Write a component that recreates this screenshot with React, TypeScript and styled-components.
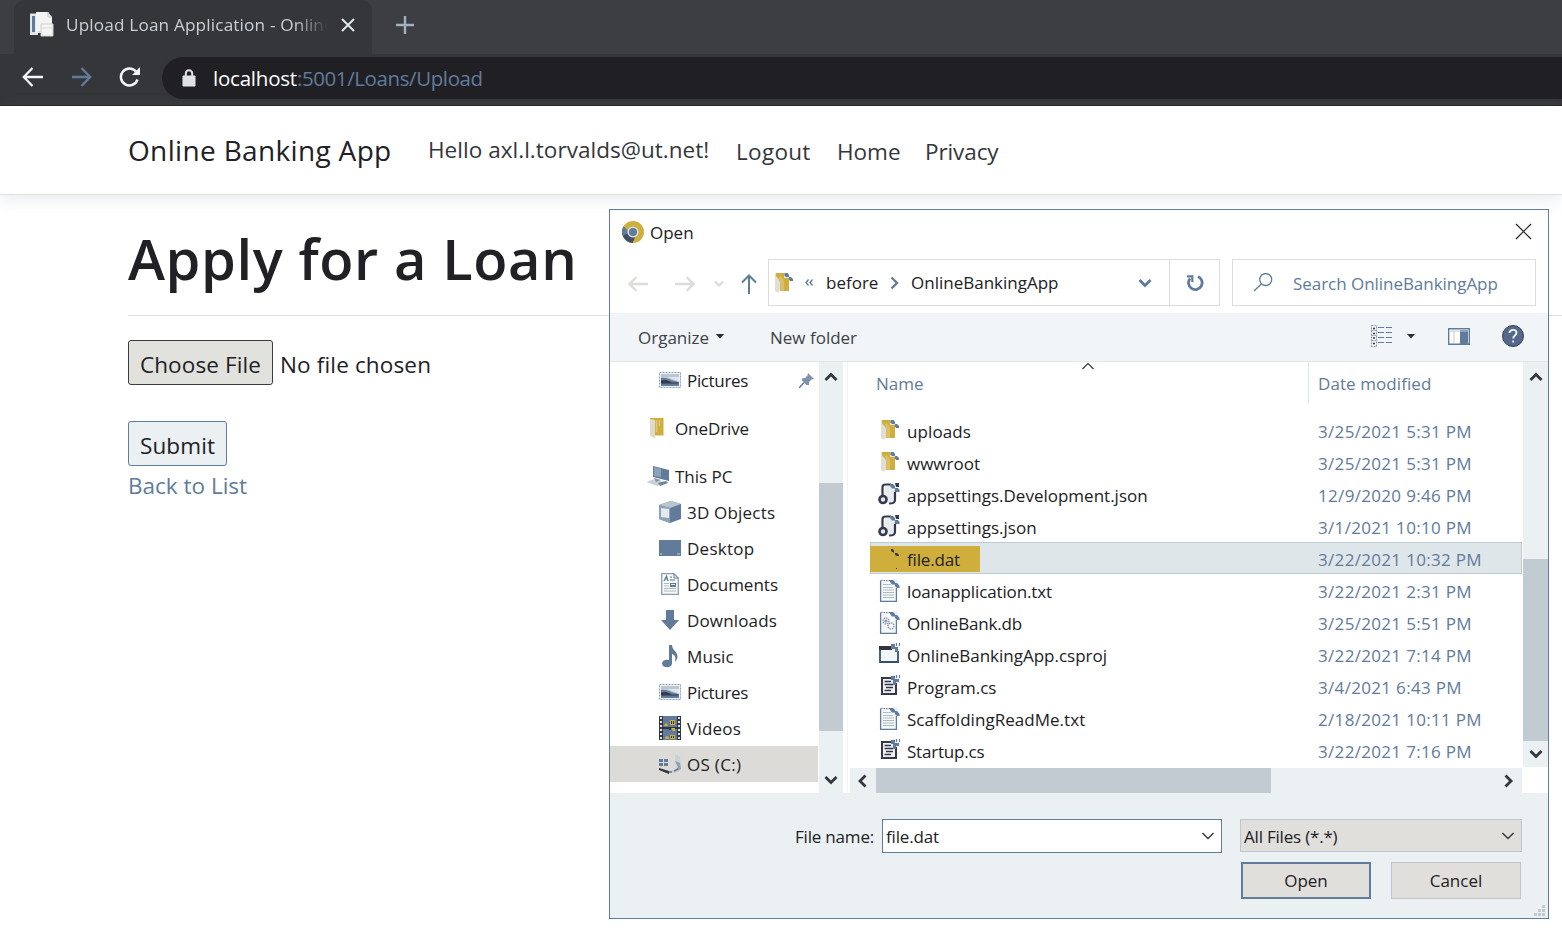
import React from "react";
import styled, { createGlobalStyle } from "styled-components";

const BLUE = "#617b9b";
const YELLOW = "#cfae3c";
const INK = "#212125";
const PALE = "#ebf0f3";
const THUMB = "#c1cbd1";

const Global = createGlobalStyle`
  html, body { margin: 0; padding: 0; background: #fff; overflow: hidden; }
  *, *::before, *::after { box-sizing: border-box; }
  body { font-family: "Open Sans", "Noto Sans", sans-serif; color: ${INK}; }
  svg { display: block; flex: none; }
  button { font: inherit; color: inherit; padding: 0; margin: 0; letter-spacing: inherit; }
`;

const Page = styled.div`
  position: relative;
  width: 1562px;
  height: 930px;
  overflow: hidden;
  background: #fff;
`;

/* Browser chrome */
const Browser = styled.header`
  height: 106px;
  background: #35363a;
  border-bottom: 1px solid #232227;
`;
const TabStrip = styled.div`
  display: flex;
  height: 54px;
  padding-left: 14px;
  background: #3d3e42;
`;
const Tab = styled.div`
  display: flex;
  align-items: center;
  width: 358px;
  padding: 0 14px 4px 15px;
  background: #35363a;
  border-radius: 11px 11px 0 0;
`;
const TabTitle = styled.span`
  width: 262px;
  margin: 0 13px 0 11px;
  white-space: nowrap;
  font-size: 17.2px;
  line-height: 28px;
  letter-spacing: 0.15px;
  color: #c9d0d4;
  mask-image: linear-gradient(to right, #000 228px, transparent 262px);
`;
const NewTab = styled.div`
  display: flex;
  align-items: center;
  padding: 0 0 4px 24px;
`;
const AddressRow = styled.div`
  display: flex;
  align-items: center;
  height: 51px;
  padding: 0 0 4px 22px;
`;
const NavGlyph = styled.div<{ $w: number }>`
  width: ${(p) => p.$w}px;
  padding-bottom: 2px;
`;
const UrlPill = styled.div`
  display: flex;
  align-items: center;
  flex: 1;
  height: 42px;
  padding-left: 20px;
  border-radius: 21px 0 0 21px;
  background: #202024;
`;
const Url = styled.span`
  margin-left: 17px;
  font-size: 20.5px;
  line-height: 40px;
  letter-spacing: -0.4px;
  color: ${BLUE};
  white-space: nowrap;
`;
const Host = styled.span`
  letter-spacing: -0.22px;
  color: #fff;
`;

/* Site */
const SiteNav = styled.nav`
  display: flex;
  align-items: center;
  height: 89px;
  padding-left: 128px;
  background: #fff;
  border-bottom: 1px solid #dfe0de;
  box-shadow: 0 4px 16px rgba(120, 150, 170, 0.18);
  white-space: nowrap;
`;
const Brand = styled.a`
  width: 300px;
  font-size: 28px;
  line-height: 40px;
  letter-spacing: 0.34px;
`;
const NavItem = styled.a<{ $w: number; $drop: number; $track?: number }>`
  width: ${(p) => p.$w}px;
  padding-top: ${(p) => p.$drop}px;
  font-size: 22.5px;
  line-height: 36px;
  letter-spacing: ${(p) => p.$track ?? 0}px;
  color: #34363b;
`;
const Main = styled.main`
  padding: 23px 0 0 128px;
  font-size: 22.5px;
`;
const Heading = styled.h1`
  margin: 0;
  height: 97px;
  font-size: 56px;
  line-height: 80px;
  font-weight: 600;
  letter-spacing: 0.6px;
`;
const Rule = styled.hr`
  margin: 0 0 24px;
  border: 0;
  border-top: 1px solid #dfe0de;
`;
const FileField = styled.div`
  display: flex;
  align-items: center;
  gap: 7px;
  height: 45px;
  margin-bottom: 36px;
`;
const FileStatus = styled.span`
  padding-top: 4px;
  letter-spacing: 0.15px;
`;
const PageButton = styled.button<{ $w: number; $strong?: boolean }>`
  display: block;
  width: ${(p) => p.$w}px;
  height: 45px;
  border: 1px solid ${(p) => (p.$strong ? "#3b3c42" : BLUE)};
  border-radius: 3px;
  background: ${(p) => (p.$strong ? "#e1e1de" : PALE)};
  line-height: 43px;
  padding-top: 2px;
  letter-spacing: 0.12px;
  white-space: nowrap;
`;
const BackLink = styled.a`
  display: block;
  line-height: 40px;
  color: ${BLUE};
`;

/* Dialog */
const Dialog = styled.section`
  position: absolute;
  left: 609px;
  top: 209px;
  width: 940px;
  height: 710px;
  display: flex;
  flex-direction: column;
  border: 1px solid ${BLUE};
  background: #fff;
  font-size: 17px;
  line-height: 24px;
  white-space: nowrap;
`;
const TitleBar = styled.div`
  display: flex;
  align-items: center;
  height: 49px;
  padding: 0 16px 6px 12px;
`;
const Title = styled.span`
  flex: 1;
  margin: 2px 0 0 6px;
`;
const LocationRow = styled.div`
  display: flex;
  height: 54px;
  padding-left: 18px;
`;
const Arrows = styled.div`
  display: flex;
  align-items: center;
  width: 140px;
  height: 49px;
`;
const Spacer = styled.div<{ $w?: number }>`
  ${(p) => (p.$w ? `width: ${p.$w}px;` : "flex: 1;")}
`;
const Boxed = styled.div<{ $w: number; $left?: number; $pad: number }>`
  display: flex;
  align-items: center;
  width: ${(p) => p.$w}px;
  height: 47px;
  margin-left: ${(p) => p.$left ?? 0}px;
  padding-left: ${(p) => p.$pad}px;
  border: 1px solid #dcdcd9;
`;
const RefreshCell = styled.div`
  display: flex;
  align-items: center;
  justify-content: center;
  width: 50px;
  height: 45px;
  margin-left: 15px;
  border-left: 1px solid #dcdcd9;
`;
const Crumb = styled.span<{ $w: number; $drop?: number }>`
  width: ${(p) => p.$w}px;
  padding-top: ${(p) => p.$drop ?? 0}px;
`;
const SearchText = styled.span`
  margin-left: 20px;
  padding-top: 2px;
  letter-spacing: -0.04px;
  color: ${BLUE};
`;
const Toolbar = styled.div`
  display: flex;
  align-items: center;
  height: 49px;
  padding: 0 24px 2px 28px;
  background: #f1f5f7;
  border-bottom: 1px solid #e1e6e8;
  color: #3d4148;
`;
const Body = styled.div`
  display: flex;
  height: 431px;
`;
const Tree = styled.div`
  width: 209px;
`;
const TreeRow = styled.div<{ $root?: boolean; $gap?: boolean; $on?: boolean }>`
  display: flex;
  align-items: center;
  width: 208px;
  height: 36px;
  margin-bottom: ${(p) => (p.$gap ? 12 : 0)}px;
  padding-left: ${(p) => (p.$root ? 36 : 49)}px;
  background: ${(p) => (p.$on ? "#dcdbd7" : "transparent")};
`;
const TreeIcon = styled.span<{ $root?: boolean }>`
  display: flex;
  width: ${(p) => (p.$root ? 29 : 28)}px;
  padding-left: ${(p) => (p.$root ? 1 : 0)}px;
`;
const TreeLabel = styled.span<{ $track?: number }>`
  flex: 1;
  padding-top: 2px;
  letter-spacing: ${(p) => p.$track ?? 0}px;
`;
const PinSlot = styled.span`
  margin-right: 4px;
`;
const VScroll = styled.div<{ $w: number }>`
  display: flex;
  flex-direction: column;
  width: ${(p) => p.$w}px;
  background: ${PALE};
`;
const VPart = styled.div<{ $h: number; $thumb?: boolean; $pad?: number }>`
  display: flex;
  justify-content: center;
  height: ${(p) => p.$h}px;
  padding-top: ${(p) => p.$pad ?? 0}px;
  background: ${(p) => (p.$thumb ? THUMB : "transparent")};
`;
const Files = styled.div`
  width: 675px;
  margin: 0 1px 0 4px;
  padding-left: 2px;
  border-left: 1px solid #f1f5f7;
`;
const Columns = styled.div`
  display: flex;
  height: 52px;
  padding-left: 26px;
  color: ${BLUE};
`;
const NameColumn = styled.div`
  display: flex;
  width: 432px;
  padding-top: 10px;
`;
const SortMark = styled.span`
  margin: -13px 0 0 157px;
`;
const DateColumn = styled.div`
  height: 41px;
  padding: 10px 0 0 9px;
  border-left: 1px solid #dfe4e6;
  letter-spacing: 0.08px;
`;
const FileRow = styled.div<{ $on?: boolean }>`
  display: flex;
  align-items: center;
  height: 32px;
  margin-left: 20px;
  padding-left: 8px;
  background: ${(p) => (p.$on ? "#dfe6ea" : "transparent")};
  box-shadow: ${(p) => (p.$on ? "inset 0 0 0 1px #bccad2" : "none")};
`;
const FileIcon = styled.span`
  width: 24px;
`;
const FileName = styled.span<{ $track?: number }>`
  width: 411px;
  margin-left: 5px;
  padding-top: 3px;
  letter-spacing: ${(p) => p.$track ?? 0}px;
`;
const Marker = styled.span`
  display: flex;
  align-items: center;
  width: 110px;
  height: 26px;
  margin: 2px 338px 0 -8px;
  padding-left: 8px;
  background: ${YELLOW};
`;
const MarkerText = styled.span`
  margin-left: 5px;
  padding-top: 1px;
  letter-spacing: -0.15px;
`;
const FileDate = styled.span`
  padding-top: 3px;
  letter-spacing: 0.32px;
  color: ${BLUE};
`;
const HScroll = styled.div`
  display: flex;
  align-items: center;
  height: 25px;
  margin-top: 2px;
  padding-right: 7px;
  background: ${PALE};
`;
const HThumb = styled.div`
  width: 395px;
  height: 25px;
  background: ${THUMB};
`;
const HArrow = styled.div`
  display: flex;
  justify-content: center;
  width: 26px;
`;
const Footer = styled.footer`
  flex: 1;
  position: relative;
  padding: 26px 26px 0 0;
  background: ${PALE};
`;
const FooterRow = styled.div<{ $top?: number }>`
  display: flex;
  justify-content: flex-end;
  margin-top: ${(p) => p.$top ?? 0}px;
  padding-right: ${(p) => (p.$top ? 1 : 0)}px;
`;
const FieldLabel = styled.span`
  height: 34px;
  margin-right: 8px;
  line-height: 35px;
  letter-spacing: -0.2px;
`;
const Combo = styled.div<{ $w: number; $grey?: boolean }>`
  display: flex;
  align-items: center;
  justify-content: space-between;
  width: ${(p) => p.$w}px;
  height: ${(p) => (p.$grey ? 33 : 34)}px;
  margin-left: ${(p) => (p.$grey ? 18 : 0)}px;
  padding: 0 6px 0 3px;
  border: 1px solid ${(p) => (p.$grey ? "#bdc7cd" : BLUE)};
  background: ${(p) => (p.$grey ? "#e0dfdb" : "#fff")};
`;
const ComboText = styled.span<{ $track: number }>`
  padding-top: 2px;
  letter-spacing: ${(p) => p.$track}px;
`;
const DialogButton = styled.button<{ $main?: boolean }>`
  width: 130px;
  height: 37px;
  margin-left: 20px;
  border: ${(p) => (p.$main ? `2px solid ${BLUE}` : "1px solid #bdc7cd")};
  background: #e0dfdb;
  padding-top: 1px;
`;
const Grip = styled.span`
  position: absolute;
  right: 2px;
  bottom: 1px;
`;

type StrokeProps = { w: number; h: number; d: string; c: string; s?: number };
const Stroke = ({ w, h, d, c, s = 2 }: StrokeProps) => (
  <svg width={w} height={h} viewBox={`0 0 ${w} ${h}`} fill="none" stroke={c} strokeWidth={s}>
    <path d={d} />
  </svg>
);

const Chevron = ({ dir, c = "#34363f", s = 2.8 }: { dir: "up" | "down" | "left" | "right"; c?: string; s?: number }) => {
  const d = {
    up: "M1.500 10L7 4.500L12.500 10",
    down: "M1.500 4L7 9.500L12.500 4",
    left: "M9.500 1.500L4 7L9.500 12.500",
    right: "M4.500 1.500L10 7L4.500 12.500",
  }[dir];
  return <Stroke w={14} h={14} d={d} c={c} s={s} />;
};

const Caret = () => (
  <svg width="8" height="5" viewBox="0 0 8 5"><path d="M0 0H8L4 4.5Z" fill="#2b2c31" /></svg>
);

const PageIcon = () => (
  <svg width="26" height="26" viewBox="0 0 26 26">
    <path d="M1 1.500H9V23H1Z" fill="#dfe6ea" />
    <path d="M3 4H6V20H3Z" fill={BLUE} />
    <path d="M7 0H19L23 5V21H7Z" fill="#f4f4f2" />
    <path d="M19 0V5H23" fill="none" stroke="#b9c4ca" />
    <path d="M12 12H24V24H12Z" fill="#f5f5f3" stroke="#cfcfc9" />
    <path d="M13 16H23M9 20H12" stroke="#d9d9d4" />
  </svg>
);

const ChromeLogo = () => (
  <svg width="22" height="22" viewBox="0 0 22 22">
    <circle cx="11" cy="11" r="11" fill={YELLOW} />
    <path d="M1.600 5.500A11 11 0 0 0 10.500 22L14 14L7 13Z" fill="#3f4e66" />
    <path d="M1.600 5.500A11 11 0 0 0 1 15L7.500 11Z" fill={BLUE} />
    <circle cx="11" cy="11" r="5.600" fill="#d5dce0" />
    <circle cx="11" cy="11" r="4" fill={BLUE} />
  </svg>
);

const Folder = () => (
  <svg width="22" height="24" viewBox="0 0 22 24">
    <path d="M3 2H15V20H7L6 22L3 20Z" fill="#e2dfd2" />
    <path d="M4 2H14V6H17V20H8V10L4 5Z" fill={YELLOW} />
    <path d="M7 6L9 5L12 10V20H8V12Z" fill="#d8c06a" />
    <path d="M12 2H15V5H17V7H12Z" fill="#dde3e6" />
    <path d="M12.500 2H15.500L17 4V6H14L12.500 4.500Z" fill={BLUE} />
    <path d="M17 6H19L21 8V10H18L17 8.500Z" fill={BLUE} />
  </svg>
);

const DriveFolder = () => (
  <svg width="22" height="22" viewBox="0 0 22 22">
    <path d="M3 1H16.500V18.500H8V21L3 18.500Z" fill={YELLOW} />
    <path d="M3 2L8 3V21L3 18.500Z" fill="#dedbce" />
    <path d="M9.500 3V15M12.500 3V9" stroke="#ddc980" strokeWidth="1.500" />
  </svg>
);

const Picture = () => (
  <svg width="22" height="16" viewBox="0 0 22 16">
    <path d="M.5 .5H21.500V15.500H.5Z" fill="#eef2f4" stroke="#8ba0b4" strokeDasharray="2 1" />
    <path d="M2 2H20V14H2Z" fill="#bac7cf" />
    <path d="M2 6C8 5 12 9 20 10V14H2Z" fill={BLUE} />
    <path d="M2 8.500L7 8L13 10.500L19 10.500V11.500H2Z" fill="#34384a" />
    <path d="M8 5L20 5V9.500Z" fill="#e2e8eb" />
  </svg>
);

const Computer = () => (
  <svg width="24" height="22" viewBox="2 0 24 22">
    <path d="M8 1L24 5V16L8 12Z" fill={BLUE} />
    <path d="M9 2L16 4V12L9 11Z" fill="#8da2b8" />
    <path d="M1 17L9 14L20 17L12 21Z" fill="#c7d0d6" />
    <path d="M9 13L16 15L11 17Z" fill="#8496aa" />
    <path d="M13 18L21 16L23 18L15 21Z" fill="#6d849f" />
  </svg>
);

const Cube = () => (
  <svg width="22" height="24" viewBox="0 0 22 24">
    <path d="M0 5L12 1L22 4V19L11 23L0 19Z" fill={BLUE} />
    <path d="M0 5L12 1L22 4L11 8Z" fill="#b9c6ce" />
    <path d="M0 5L11 8V23L0 19Z" fill="#8fa3b8" />
    <path d="M2 8L10 9V18L2 17Z" fill="#e4eaed" />
  </svg>
);

const Desktop = () => (
  <svg width="22" height="16" viewBox="0 0 22 16">
    <path d="M0 0H22V16H0Z" fill={BLUE} />
    <path d="M1 14H3M18 14H21" stroke="#c7d2d9" />
  </svg>
);

const Documents = () => (
  <svg width="20" height="22" viewBox="-2 0 20 22">
    <path d="M.7 .7H13L17.300 5V21.300H.7Z" fill="#f8f8f6" stroke="#8ba0b4" strokeWidth="1.300" />
    <path d="M13 .7V5H17" fill="none" stroke={BLUE} />
    <path d="M3 8L5.500 3L7 8M4 6H7M9 4H11M9 7H14" fill="none" stroke={BLUE} strokeWidth="1.200" />
    <path d="M3 10.500H8M3 13H8M3 15.500H15M3 18H15" stroke="#b0b9bf" />
    <path d="M9 10H15V14H9Z" fill={BLUE} />
    <path d="M10 11H14V12H10Z" fill="#dfe6ea" />
  </svg>
);

const Download = () => (
  <svg width="20" height="20" viewBox="-2 0 20 20"><path d="M5 0H13V10H18L9 20L0 10H5Z" fill={BLUE} /></svg>
);

const Music = () => (
  <svg width="20" height="24" viewBox="-2 0 20 24">
    <ellipse cx="6" cy="19.500" rx="5" ry="3.800" fill={BLUE} />
    <path d="M8 1H11C11 6 17 8 16.500 13C16.300 15 15 17 14 18C15 13 14 11 11 10V20H8Z" fill={BLUE} />
  </svg>
);

const Videos = () => (
  <svg width="22" height="24" viewBox="0 0 22 24">
    <path d="M0 0H22V24H0Z" fill="#34363f" />
    <path d="M4 0H18V11H4ZM4 13H18V24H4Z" fill={BLUE} />
    <path d="M2 1V24M20 1V24" stroke="#dfe6ea" strokeWidth="2" strokeDasharray="2 2" />
    <path d="M5 10C7 6 8 7 9 10ZM11 4H16V9H11ZM12 12H16V15H14ZM6 23C6 19 10 19 10 23ZM11 19H16V23H11Z" fill={YELLOW} />
    <path d="M12 5H13V8H12ZM14 5H15V8H14ZM12 20H13V22H12ZM14 20H15V22H14ZM10 11H12V14H10Z" fill="#34363f" />
  </svg>
);

const Drive = () => (
  <svg width="24" height="24" viewBox="0 0 24 24">
    <path d="M0 7H4V10H0ZM5 7H9V10H5ZM0 11H4V14H0ZM5 11H9V14H5Z" fill={BLUE} />
    <path d="M16 2L21 5L22 15L18 19L16 9Z" fill="#c7d1d7" />
    <path d="M16 9L21 11L22 17L15 21L19 15Z" fill="#8fa1b3" />
    <path d="M0 16L10 19L18 17L19 19L10 22L0 18Z" fill="#c9d1d6" />
    <path d="M0 16L10 19V22L0 18Z" fill="#34363f" />
    <path d="M10 20H13M15 19L19 17" stroke={BLUE} strokeWidth="1.500" />
  </svg>
);

const Pin = () => (
  <svg width="15" height="15" viewBox="0 0 15 15">
    <path d="M9 0L15 6L12.500 6.500L10 9L10 12L7.500 12L3 7.500V5.500L6 5L8.500 2.500Z" fill="#7e93aa" />
    <path d="M5 9.500L0 15" stroke={BLUE} strokeWidth="1.500" />
  </svg>
);

const LinkBadge = () => (
  <>
    <path d="M12 1H20L22 10H17L12 6Z" fill="#eef2f4" />
    <path d="M12 2H15L17 4V6.500H14L12 4Z" fill={BLUE} />
    <path d="M17 5H19L21.500 8V10H19L17 8Z" fill={BLUE} />
  </>
);

const TextDoc = ({ gears }: { gears?: boolean }) => (
  <svg width="24" height="24" viewBox="0 0 24 24">
    <path d="M12 2.600H2.600" stroke={BLUE} strokeWidth="1.200" strokeDasharray="1.500 1" />
    <path d="M2.600 2.600V23.300H18.400V10" fill="#f6f8f9" stroke={BLUE} strokeWidth="1.300" />
    {gears ? (
      <g fill="none" stroke="#7c8ea1" strokeWidth="1.200">
        <circle cx="8" cy="11" r="3" strokeDasharray="1.500 .8" />
        <circle cx="8" cy="11" r="1" />
        <circle cx="13" cy="16" r="3" strokeDasharray="1.500 .8" />
      </g>
    ) : (
      <path d="M5 6.500H13M5 9.500H15M5 12H16M5 14.500H16M5 17H16M5 19.500H16" stroke="#aebbc5" />
    )}
    <LinkBadge />
  </svg>
);

const JsonDoc = () => (
  <svg width="24" height="24" viewBox="0 0 24 24">
    <path d="M7 4H17V21H9V12H6Z" fill="#e6ecef" />
    <path d="M4.500 13V5C4.500 3 6 2.500 8 2.500H13M17 10V18C17 21 15 21.500 11 21.500" fill="none" stroke="#34384a" strokeWidth="2.200" />
    <circle cx="5" cy="17.500" r="3.500" fill="#e6ecef" stroke="#34384a" strokeWidth="2.600" />
    <path d="M17 1H21V5H18Z" fill="#34384a" />
    <path d="M12 2H15L17 4V6.500H14L12 4ZM17 6H20L21.500 8V10H17Z" fill={BLUE} />
  </svg>
);

const DatGlyph = () => (
  <svg width="24" height="24" viewBox="0 0 24 24">
    <path d="M13 2H15L16 4V6L13 4ZM17 6H19L21 8V9H19L17 8ZM18 21H19V22H18Z" fill="#34363f" />
  </svg>
);

const ProjDoc = () => (
  <svg width="24" height="24" viewBox="0 0 24 24">
    <path d="M2 5H20V20H2Z" fill="#f3f6f7" stroke="#34506f" strokeWidth="1.800" />
    <path d="M1 4H14V8H1Z" fill="#34363f" />
    <path d="M12 1H22V9H15Z" fill="#eef2f4" />
    <path d="M13 2H17V5H20V10H17V7H13ZM18 1H19V4H18ZM21 1H22V4H21Z" fill={BLUE} />
  </svg>
);

const CodeDoc = () => (
  <svg width="24" height="24" viewBox="0 0 24 24">
    <path d="M4 4H18V20H4Z" fill="#eef2f4" stroke="#34384a" strokeWidth="2" />
    <path d="M6.500 7.500H13M6.500 10.500H15M8 13.500H15M6.500 16.500H13" stroke="#34384a" strokeWidth="1.500" />
    <path d="M12 1H22V9H15Z" fill="#eef2f4" />
    <path d="M13 2H17V5H21V8H18V11H15V6H13ZM18 1H19V4H18ZM21 1H22V4H21Z" fill={BLUE} />
  </svg>
);

type Place = { label: string; icon: React.ReactNode; root?: boolean; gap?: boolean; on?: boolean; pin?: boolean; track?: number };
const places: Place[] = [
  { label: "Pictures", icon: <Picture />, gap: true, pin: true, track: -0.35 },
  { label: "OneDrive", icon: <DriveFolder />, root: true, gap: true, track: -0.1 },
  { label: "This PC", icon: <Computer />, root: true },
  { label: "3D Objects", icon: <Cube />, track: 0.2 },
  { label: "Desktop", icon: <Desktop />, track: 0.25 },
  { label: "Documents", icon: <Documents /> },
  { label: "Downloads", icon: <Download />, track: 0.15 },
  { label: "Music", icon: <Music />, track: 0.1 },
  { label: "Pictures", icon: <Picture />, track: -0.35 },
  { label: "Videos", icon: <Videos />, track: 0.25 },
  { label: "OS (C:)", icon: <Drive />, on: true, track: 0.3 },
];

type Entry = { name: string; date: string; icon: React.ReactNode; on?: boolean; track?: number };
const entries: Entry[] = [
  { name: "uploads", date: "3/25/2021 5:31 PM", icon: <Folder />, track: 0.1 },
  { name: "wwwroot", date: "3/25/2021 5:31 PM", icon: <Folder /> },
  { name: "appsettings.Development.json", date: "12/9/2020 9:46 PM", icon: <JsonDoc /> },
  { name: "appsettings.json", date: "3/1/2021 10:10 PM", icon: <JsonDoc /> },
  { name: "file.dat", date: "3/22/2021 10:32 PM", icon: <DatGlyph />, on: true },
  { name: "loanapplication.txt", date: "3/22/2021 2:31 PM", icon: <TextDoc />, track: -0.12 },
  { name: "OnlineBank.db", date: "3/25/2021 5:51 PM", icon: <TextDoc gears />, track: -0.17 },
  { name: "OnlineBankingApp.csproj", date: "3/22/2021 7:14 PM", icon: <ProjDoc /> },
  { name: "Program.cs", date: "3/4/2021 6:43 PM", icon: <CodeDoc /> },
  { name: "ScaffoldingReadMe.txt", date: "2/18/2021 10:11 PM", icon: <TextDoc />, track: 0.04 },
  { name: "Startup.cs", date: "3/22/2021 7:16 PM", icon: <CodeDoc />, track: -0.2 },
];

const OpenDialog = () => (
  <Dialog>
    <TitleBar>
      <ChromeLogo />
      <Title>Open</Title>
      <Stroke w={17} h={17} d="M1 1L16 16M16 1L1 16" c={INK} s={1.2} />
    </TitleBar>
    <LocationRow>
      <Arrows>
        <Stroke w={21} h={16} d="M8.500 1L1.500 8L8.500 15M1.500 8H20" c="#dcdcd9" s={2.3} />
        <Spacer $w={26} />
        <Stroke w={20} h={16} d="M11.500 1L18.500 8L11.500 15M18.500 8H0" c="#dcdcd9" s={2.3} />
        <Spacer $w={19} />
        <Stroke w={10} h={8} d="M1 1.500L5 5.500L9 1.500" c="#dcdcd9" s={2.3} />
        <Spacer $w={17} />
        <Stroke w={16} h={20} d="M1 8.500L8 1.500L15 8.500M8 1.500V20" c={BLUE} />
      </Arrows>
      <Boxed $w={452} $pad={3}>
        <Folder />
        <Spacer $w={11} />
        <Stroke w={8} h={7} d="M3.500 .5L1 3.500L3.500 6.500M7.500 .5L5 3.500L7.500 6.500" c={BLUE} s={1.3} />
        <Spacer $w={13} />
        <Crumb $w={61}>before</Crumb>
        <Chevron dir="right" c={BLUE} s={2.4} />
        <Spacer $w={10} />
        <Crumb $w={227}>OnlineBankingApp</Crumb>
        <Chevron dir="down" c={BLUE} />
        <Spacer $w={2} />
        <RefreshCell>
          <svg width="18" height="18" viewBox="0 0 18 18" fill="none" stroke={BLUE} strokeWidth="2.800">
            <path d="M12 2.500A6.800 6.800 0 1 1 4 4.500" />
            <path d="M1 2.300H6.300V8" strokeWidth="2.200" />
          </svg>
        </RefreshCell>
      </Boxed>
      <Boxed $w={304} $left={12} $pad={20}>
        <svg width="20" height="20" viewBox="0 0 20 20" fill="none" stroke={BLUE} strokeWidth="1.300">
          <circle cx="12.700" cy="6.500" r="6" />
          <path d="M8.500 10.700L1 18" />
        </svg>
        <SearchText>Search OnlineBankingApp</SearchText>
      </Boxed>
    </LocationRow>
    <Toolbar>
      <Crumb $w={78} $drop={3}>Organize</Crumb>
      <Caret />
      <Spacer $w={46} />
      <Crumb $w={90} $drop={3}>New folder</Crumb>
      <Spacer />
      <svg width="22" height="22" viewBox="0 0 22 22" fill="none">
        <path d="M.5 .5H5.500V21.500H.5ZM.5 5.500H5M.5 10.500H5M.5 15.500H5" stroke="#8b98a5" strokeDasharray="2 1" />
        <path d="M2 3.500H4M2 8.500H4M2 13H4M2 18.500H4" stroke="#34363f" strokeWidth="1.600" />
        <path d="M7 2.500H13M15 2.500H21M7 7.500H13M15 7.500H21M7 12.500H13M15 12.500H21M7 17.500H13M15 17.500H21" stroke={BLUE} />
      </svg>
      <Spacer $w={14} />
      <Caret />
      <Spacer $w={33} />
      <svg width="22" height="17" viewBox="0 0 22 17">
        <path d="M.7 .7H21.300V16.300H.7Z" fill="#fff" stroke={BLUE} strokeWidth="1.400" />
        <path d="M12 2H20V16H12Z" fill={BLUE} />
        <path d="M6 3V15M1 3H21" stroke="#c1cbd1" />
      </svg>
      <Spacer $w={32} />
      <svg width="22" height="22" viewBox="0 0 22 22">
        <circle cx="11" cy="11" r="10.500" fill="#54698a" stroke="#34405a" />
        <path d="M7.500 8C7.500 3.800 14.500 4 14.500 8C14.500 10.500 11.200 10.600 11.200 13.600M11.200 15.400V17.400" fill="none" stroke="#eef2f4" strokeWidth="1.900" />
      </svg>
    </Toolbar>
    <Body>
      <Tree>
        {places.map((p, i) => (
          <TreeRow key={i} $root={p.root} $gap={p.gap} $on={p.on}>
            <TreeIcon $root={p.root}>{p.icon}</TreeIcon>
            <TreeLabel $track={p.track}>{p.label}</TreeLabel>
            {p.pin && <PinSlot><Pin /></PinSlot>}
          </TreeRow>
        ))}
      </Tree>
      <VScroll $w={24}>
        <VPart $h={121} $pad={8}><Chevron dir="up" /></VPart>
        <VPart $h={248} $thumb />
        <Spacer />
        <VPart $h={30} $pad={10}><Chevron dir="down" /></VPart>
      </VScroll>
      <Files>
        <Columns>
          <NameColumn>
            <span>Name</span>
            <SortMark><Chevron dir="up" s={1.2} /></SortMark>
          </NameColumn>
          <DateColumn>Date modified</DateColumn>
        </Columns>
        {entries.map((e) => (
          <FileRow key={e.name} $on={e.on}>
            {e.on ? (
              <Marker>
                <FileIcon>{e.icon}</FileIcon>
                <MarkerText>{e.name}</MarkerText>
              </Marker>
            ) : (
              <>
                <FileIcon>{e.icon}</FileIcon>
                <FileName $track={e.track}>{e.name}</FileName>
              </>
            )}
            <FileDate>{e.date}</FileDate>
          </FileRow>
        ))}
        <HScroll>
          <HArrow><Chevron dir="left" /></HArrow>
          <HThumb />
          <Spacer />
          <Chevron dir="right" />
        </HScroll>
      </Files>
      <div>
        <VScroll $w={25}>
          <VPart $h={197} $pad={8}><Chevron dir="up" /></VPart>
          <VPart $h={182} $thumb />
          <VPart $h={26} $pad={6}><Chevron dir="down" /></VPart>
        </VScroll>
      </div>
    </Body>
    <Footer>
      <FooterRow>
        <FieldLabel>File name:</FieldLabel>
        <Combo $w={340}>
          <ComboText $track={-0.15}>file.dat</ComboText>
          <Chevron dir="down" s={1.4} />
        </Combo>
        <Combo $w={282} $grey>
          <ComboText $track={-0.2}>All Files (*.*)</ComboText>
          <Chevron dir="down" s={1.4} />
        </Combo>
      </FooterRow>
      <FooterRow $top={9}>
        <DialogButton $main>Open</DialogButton>
        <DialogButton>Cancel</DialogButton>
      </FooterRow>
      <Grip>
        <svg width="12" height="12" viewBox="0 0 12 12">
          <path d="M8 0H11V3H8ZM4 4H7V7H4ZM8 4H11V7H8ZM0 8H3V11H0ZM4 8H7V11H4ZM8 8H11V11H8Z" fill={THUMB} />
        </svg>
      </Grip>
    </Footer>
  </Dialog>
);

export default function App() {
  return (
    <Page>
      <Global />
      <Browser>
        <TabStrip>
          <Tab>
            <PageIcon />
            <TabTitle>Upload Loan Application - Online</TabTitle>
            <Stroke w={14} h={14} d="M1 1L13 13M13 1L1 13" c="#dfe6ea" />
          </Tab>
          <NewTab>
            <Stroke w={18} h={18} d="M9 0V18M0 9H18" c="#9fb0be" s={2.4} />
          </NewTab>
        </TabStrip>
        <AddressRow>
          <NavGlyph $w={50}>
            <Stroke w={21} h={20} d="M10.500 1L1.800 10L10.500 19M1.800 10H21" c="#f4f6f7" s={2.3} />
          </NavGlyph>
          <NavGlyph $w={46}>
            <Stroke w={20} h={20} d="M9.500 1L18.200 10L9.500 19M18.200 10H0" c={BLUE} s={2.3} />
          </NavGlyph>
          <NavGlyph $w={44}>
            <svg width="23" height="20" viewBox="-1 0 23 20" fill="none" stroke="#f4f6f7" strokeWidth="2.500">
              <path d="M18.500 12.500A8.500 8.500 0 1 1 17 4.500" />
              <path d="M21 0V8H13Z" fill="#f4f6f7" stroke="none" />
            </svg>
          </NavGlyph>
          <UrlPill>
            <svg width="14" height="18" viewBox="0 0 14 18">
              <path d="M1 7H13V17H1Z" fill="#dfe2e3" stroke="#dfe2e3" strokeLinejoin="round" />
              <path d="M3.800 8V4.500A3.200 3.200 0 0 1 10.200 4.500V8" fill="none" stroke="#dfe2e3" strokeWidth="2" />
            </svg>
            <Url><Host>localhost</Host>:5001/Loans/Upload</Url>
          </UrlPill>
        </AddressRow>
      </Browser>
      <SiteNav>
        <Brand>Online Banking App</Brand>
        <NavItem $w={308} $drop={0} $track={0.03}>Hello axl.l.torvalds@ut.net!</NavItem>
        <NavItem $w={101} $drop={4} $track={0.3}>Logout</NavItem>
        <NavItem $w={88} $drop={4}>Home</NavItem>
        <NavItem $w={80} $drop={4} $track={-0.1}>Privacy</NavItem>
      </SiteNav>
      <Main>
        <Heading>Apply for a Loan</Heading>
        <Rule />
        <FileField>
          <PageButton $w={145} $strong>Choose File</PageButton>
          <FileStatus>No file chosen</FileStatus>
        </FileField>
        <PageButton $w={99}>Submit</PageButton>
        <BackLink>Back to List</BackLink>
      </Main>
      <OpenDialog />
    </Page>
  );
}
